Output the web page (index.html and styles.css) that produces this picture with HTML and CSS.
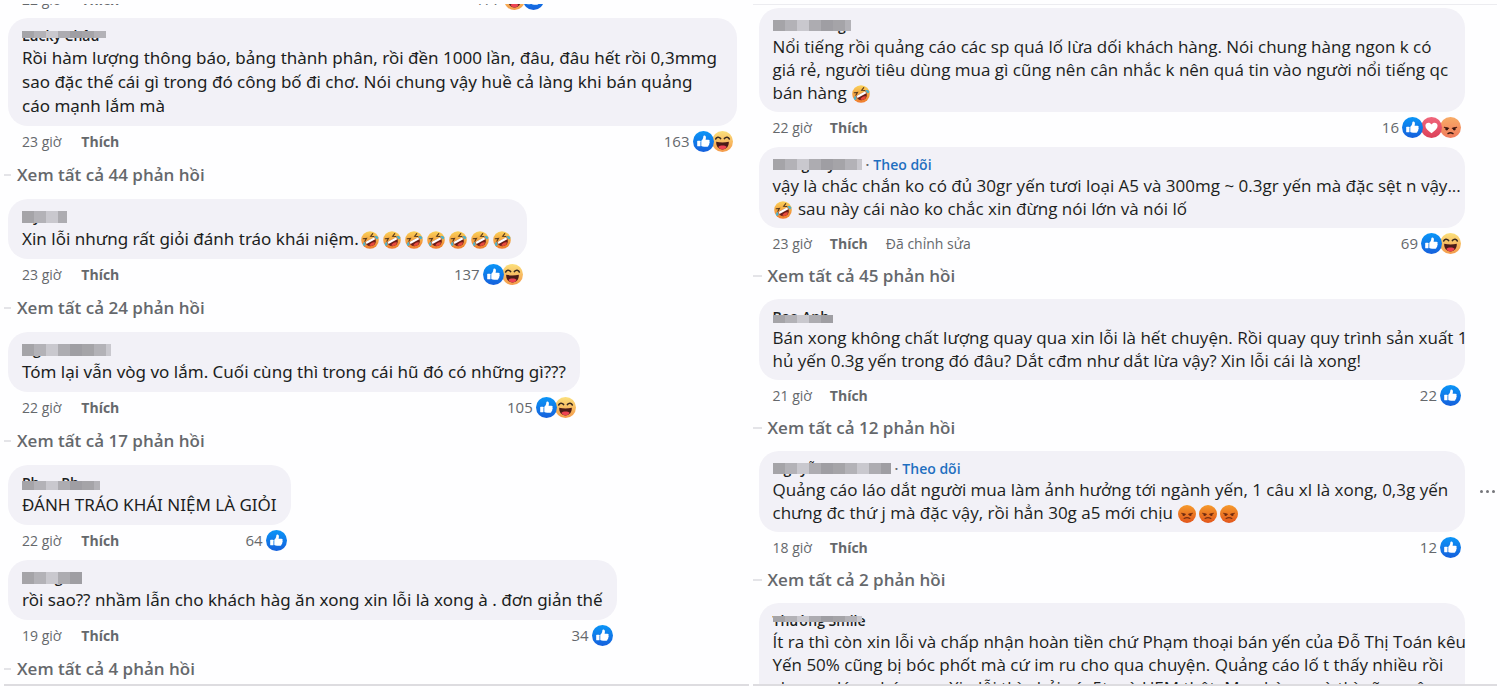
FILE: index.html
```html
<!DOCTYPE html>
<html lang="vi">
<head>
  <meta charset="UTF-8">
  <meta name="viewport" content="width=device-width, initial-scale=1.0">
  <title>Bình luận</title>
  <link rel="stylesheet" href="styles.css">
</head>
<body>
  <!-- Biểu tượng dùng chung -->
  <svg class="defs" aria-hidden="true">
    <defs>
      <linearGradient id="gBlue" x1="0" y1="0" x2="0" y2="1"><stop offset="0" stop-color="#0a95f7"/><stop offset="1" stop-color="#1560dc"/></linearGradient>
      <linearGradient id="gRed" x1="0" y1="0" x2="0" y2="1"><stop offset="0" stop-color="#f0667c"/><stop offset="1" stop-color="#dc4058"/></linearGradient>
      <linearGradient id="gYellow" x1="0" y1="0" x2="0" y2="1"><stop offset="0" stop-color="#fbe07c"/><stop offset="1" stop-color="#f49a4a"/></linearGradient>
      <linearGradient id="gOrange" x1="0" y1="0" x2="0" y2="1"><stop offset="0" stop-color="#f8ac66"/><stop offset="1" stop-color="#f07a5c"/></linearGradient>
      <linearGradient id="gMad" x1="0" y1="0" x2="0" y2="1"><stop offset="0" stop-color="#f59a2c"/><stop offset="1" stop-color="#e2561c"/></linearGradient>
      <linearGradient id="gRofl" x1="0" y1="0" x2="0" y2="1"><stop offset="0" stop-color="#fad25a"/><stop offset="1" stop-color="#ef7a2c"/></linearGradient>
    </defs>
    <symbol id="like" viewBox="0 0 20 20">
      <circle cx="10" cy="10" r="10" fill="url(#gBlue)"/>
      <path d="M4.600 9.200h1.900c.4 0 .6.2.6.6v4.200c0 .4-.2.6-.6.6H4.600c-.4 0-.6-.2-.6-.6V9.800c0-.4.2-.6.6-.6z" fill="#fff"/>
      <path d="M7.900 9.300c1.200-.8 1.800-2 1.900-3.500 0-.9.4-1.400 1.100-1.400 1 0 1.500.9 1.400 2.100 0 .7-.2 1.300-.3 1.800h2.600c1.300 0 1.700 1.200 1 1.900.5.6.4 1.400-.2 1.800.3.700 0 1.300-.6 1.600.1.900-.5 1.400-1.500 1.400h-2.700c-1.100 0-1.900-.3-2.700-.8z" fill="#fff"/>
    </symbol>
    <symbol id="haha" viewBox="0 0 20 20">
      <circle cx="10" cy="10" r="10" fill="url(#gYellow)"/>
      <path d="M3.500 7.600c.7-2 3.200-2.400 4.700-.4M11.800 7.200c1.500-2 4-1.600 4.700.4" fill="none" stroke="#3a2a20" stroke-width="1.500" stroke-linecap="round"/>
      <path d="M4 10.300c3.600.8 8.400.8 12 0 .3 4.200-2.200 7.200-6 7.200s-6.300-3-6-7.200z" fill="#4a1b18"/>
      <path d="M6 15.200c1.800-1.800 6.200-1.800 8 0-1 1.500-2.300 2.300-4 2.300s-3-.8-4-2.300z" fill="#ee4352"/>
    </symbol>
    <symbol id="love" viewBox="0 0 20 20">
      <circle cx="10" cy="10" r="10" fill="url(#gRed)"/>
      <path d="M10 15.400C6.500 13 4.200 11 4.200 8.400c0-3 3.900-3.900 5.800-1.300 1.900-2.600 5.800-1.700 5.800 1.300 0 2.600-2.300 4.600-5.800 7z" fill="#fff"/>
    </symbol>
    <symbol id="angry" viewBox="0 0 20 20">
      <circle cx="10" cy="10" r="10" fill="url(#gOrange)"/>
      <path d="M4.200 9.800l4 1M15.800 9.800l-4 1" stroke="#5a2418" stroke-width="1.200" stroke-linecap="round"/>
      <circle cx="6.400" cy="11.500" r="1.400" fill="#3a1812"/>
      <circle cx="13.600" cy="11.500" r="1.400" fill="#3a1812"/>
      <path d="M7.600 15.800c1.300-.8 3.500-.8 4.800 0" fill="none" stroke="#3a1812" stroke-width="1.400" stroke-linecap="round"/>
    </symbol>
    <symbol id="mad" viewBox="0 0 20 20">
      <circle cx="10" cy="10" r="10" fill="url(#gMad)"/>
      <path d="M4 9.200l4.200 1.200M16 9.200l-4.200 1.200" stroke="#8a3812" stroke-width="1.300" stroke-linecap="round"/>
      <circle cx="6.300" cy="10.800" r="1.400" fill="#6a2a12"/>
      <circle cx="13.700" cy="10.800" r="1.400" fill="#6a2a12"/>
      <path d="M6.800 15c1.700-1.100 4.700-1.100 6.400 0" fill="none" stroke="#7a3012" stroke-width="1.300" stroke-linecap="round"/>
    </symbol>
    <symbol id="rofl" viewBox="0 0 20 20">
      <circle cx="10" cy="10" r="9.800" fill="url(#gRofl)"/>
      <g transform="rotate(-28 10 10)">
        <path d="M4 5.200l3.300 1.500L4.300 8.600M16 5.200l-3.300 1.500 3 1.900" fill="none" stroke="#5a3a1c" stroke-width="1.300" stroke-linecap="round"/>
        <path d="M4 9.600h12c.3 4.500-2.200 7.400-6 7.400s-6.300-2.900-6-7.400z" fill="#6b1d18"/>
        <path d="M4.500 9.600h11v2.500h-11z" fill="#fff"/>
        <path d="M6.400 15c1.700-1.700 5.500-1.700 7.200 0-1 1.300-2.100 2-3.600 2s-2.600-.7-3.600-2z" fill="#e8493c"/>
        <path d="M3.600 8.800C1.500 9 .3 10.500.6 12c.3 1.200 2.200 1.400 2.700.2.400-.9.300-2.200.3-3.400zM16.400 8.800c2.100.2 3.300 1.700 3 3.200-.3 1.200-2.200 1.400-2.700.2-.4-.9-.3-2.200-.3-3.400z" fill="#4fb0c8"/>
      </g>
    </symbol>
  </svg>

  <main class="board">
    <!-- Cột trái -->
    <section class="pane pane-left">
      <article class="comment cut">
        <div class="actions">
          <span>22 giờ</span><button type="button" class="strong">Thích</button>
          <span class="reactions"><span class="count">177</span><svg><use href="#haha"/></svg><svg><use href="#like"/></svg></span>
        </div>
      </article>

      <article class="comment full">
        <div class="bubble">
          <div class="author"><span class="name low">Lucky Châu</span></div>
          <p>Rồi hàm lượng thông báo, bảng thành phân, rồi đền 1000 lần, đâu, đâu hết rồi 0,3mmg<br>sao đặc thế cái gì trong đó công bố đi chơ. Nói chung vậy huề cả làng khi bán quảng<br>cáo mạnh lắm mà</p>
        </div>
        <div class="actions">
          <span>23 giờ</span><button type="button" class="strong">Thích</button>
          <span class="reactions"><span class="count">163</span><svg><use href="#like"/></svg><svg><use href="#haha"/></svg></span>
        </div>
      </article>
      <button type="button" class="replies">Xem tất cả 44 phản hồi</button>

      <article class="comment">
        <div class="bubble">
          <div class="author"><span class="name short">&nbsp;&nbsp;&nbsp;y</span></div>
          <p>Xin lỗi nhưng rất giỏi đánh tráo khái niệm.<svg class="emoji"><use href="#rofl"/></svg><svg class="emoji"><use href="#rofl"/></svg><svg class="emoji"><use href="#rofl"/></svg><svg class="emoji"><use href="#rofl"/></svg><svg class="emoji"><use href="#rofl"/></svg><svg class="emoji"><use href="#rofl"/></svg><svg class="emoji"><use href="#rofl"/></svg></p>
        </div>
        <div class="actions">
          <span>23 giờ</span><button type="button" class="strong">Thích</button>
          <span class="reactions"><span class="count">137</span><svg><use href="#like"/></svg><svg><use href="#haha"/></svg></span>
        </div>
      </article>
      <button type="button" class="replies">Xem tất cả 24 phản hồi</button>

      <article class="comment">
        <div class="bubble">
          <div class="author"><span class="name long">&nbsp;&nbsp;&nbsp;g</span></div>
          <p>Tóm lại vẫn vòg vo lắm. Cuối cùng thì trong cái hũ đó có những gì???</p>
        </div>
        <div class="actions">
          <span>22 giờ</span><button type="button" class="strong">Thích</button>
          <span class="reactions"><span class="count">105</span><svg><use href="#like"/></svg><svg><use href="#haha"/></svg></span>
        </div>
      </article>
      <button type="button" class="replies">Xem tất cả 17 phản hồi</button>

      <article class="comment">
        <div class="bubble">
          <div class="author"><span class="name mid high">Ph&nbsp;&nbsp;&nbsp;&nbsp;&nbsp;&nbsp;Ph</span></div>
          <p>ĐÁNH TRÁO KHÁI NIỆM LÀ GIỎI</p>
        </div>
        <div class="actions">
          <span>22 giờ</span><button type="button" class="strong">Thích</button>
          <span class="reactions"><span class="count">64</span><svg><use href="#like"/></svg></span>
        </div>
      </article>

      <article class="comment">
        <div class="bubble">
          <div class="author"><span class="name small">&nbsp;&nbsp;&nbsp;&nbsp;&nbsp;&nbsp;&nbsp;&nbsp;&nbsp;g</span></div>
          <p>rồi sao?? nhầm lẫn cho khách hàg ăn xong xin lỗi là xong à . đơn giản thế</p>
        </div>
        <div class="actions">
          <span>19 giờ</span><button type="button" class="strong">Thích</button>
          <span class="reactions"><span class="count">34</span><svg><use href="#like"/></svg></span>
        </div>
      </article>
      <button type="button" class="replies">Xem tất cả 4 phản hồi</button>
    </section>

    <!-- Cột phải -->
    <section class="pane pane-right">
      <article class="comment full">
        <div class="bubble">
          <div class="author"><span class="name mid">&nbsp;&nbsp;&nbsp;&nbsp;&nbsp;&nbsp;&nbsp;&nbsp;&nbsp;&nbsp;&nbsp;&nbsp;&nbsp;&nbsp;&nbsp;&nbsp;&nbsp;&nbsp;g</span></div>
          <p>Nổi tiếng rồi quảng cáo các sp quá lố lừa dối khách hàng. Nói chung hàng ngon k có<br>giá rẻ, người tiêu dùng mua gì cũng nên cân nhắc k nên quá tin vào người nổi tiếng qc<br>bán hàng <svg class="emoji"><use href="#rofl"/></svg></p>
        </div>
        <div class="actions">
          <span>22 giờ</span><button type="button" class="strong">Thích</button>
          <span class="reactions"><span class="count">16</span><svg><use href="#like"/></svg><svg><use href="#love"/></svg><svg><use href="#angry"/></svg></span>
        </div>
      </article>

      <article class="comment full">
        <div class="bubble">
          <div class="author"><span class="name long">&nbsp;&nbsp;&nbsp;&nbsp;&nbsp;&nbsp;&nbsp;&nbsp;g&nbsp;&nbsp;&nbsp;&nbsp;&nbsp;y</span><span class="dot">·</span><a href="#">Theo dõi</a></div>
          <p>vậy là chắc chắn ko có đủ 30gr yến tươi loại A5 và 300mg ~ 0.3gr yến mà đặc sệt n vậy...<br><svg class="emoji"><use href="#rofl"/></svg> sau này cái nào ko chắc xin đừng nói lớn và nói lố</p>
        </div>
        <div class="actions">
          <span>23 giờ</span><button type="button" class="strong">Thích</button><span>Đã chỉnh sửa</span>
          <span class="reactions"><span class="count">69</span><svg><use href="#like"/></svg><svg><use href="#haha"/></svg></span>
        </div>
      </article>
      <button type="button" class="replies">Xem tất cả 45 phản hồi</button>

      <article class="comment full">
        <div class="bubble">
          <div class="author"><span class="name small high">Bao Anh</span></div>
          <p>Bán xong không chất lượng quay qua xin lỗi là hết chuyện. Rồi quay quy trình sản xuất 1<br>hủ yến 0.3g yến trong đó đâu? Dắt cđm như dắt lừa vậy? Xin lỗi cái là xong!</p>
        </div>
        <div class="actions">
          <span>21 giờ</span><button type="button" class="strong">Thích</button>
          <span class="reactions"><span class="count">22</span><svg><use href="#like"/></svg></span>
        </div>
      </article>
      <button type="button" class="replies">Xem tất cả 12 phản hồi</button>

      <article class="comment full">
        <div class="bubble">
          <div class="author"><span class="name wide">&nbsp;&nbsp;&nbsp;guyễ</span><span class="dot">·</span><a href="#">Theo dõi</a></div>
          <p>Quảng cáo láo dắt người mua làm ảnh hưởng tới ngành yến, 1 câu xl là xong, 0,3g yến<br>chưng đc thứ j mà đặc vậy, rồi hẳn 30g a5 mới chịu <svg class="emoji"><use href="#mad"/></svg><svg class="emoji"><use href="#mad"/></svg><svg class="emoji"><use href="#mad"/></svg></p>
        </div>
        <button type="button" class="more" aria-label="Tùy chọn"><i></i><i></i><i></i></button>
        <div class="actions">
          <span>18 giờ</span><button type="button" class="strong">Thích</button>
          <span class="reactions"><span class="count">12</span><svg><use href="#like"/></svg></span>
        </div>
      </article>
      <button type="button" class="replies">Xem tất cả 2 phản hồi</button>

      <article class="comment full">
        <div class="bubble">
          <div class="author"><span class="name long low">Thường Smile</span></div>
          <p>Ít ra thì còn xin lỗi và chấp nhận hoàn tiền chứ Phạm thoại bán yến của Đỗ Thị Toán kêu<br>Yến 50% cũng bị bóc phốt mà cứ im ru cho qua chuyện. Quảng cáo lố t thấy nhiều rồi<br>chưa ra láo, nháo ra... Xin lỗi thì phải có, 5tr và UEM thật, Mua hàng mà thì cũng nên</p>
        </div>
      </article>
    </section>
  </main>
</body>
</html>
```
FILE: styles.css
```css
* {
  box-sizing: border-box;
}
body {
  margin: 0;
  background: #fefeff;
  color: #1c1e21;
  font-family: "Open Sans", "Noto Sans", sans-serif;
  font-size: 17px;
}
button {
  padding: 0;
  border: 0;
  background: none;
  color: inherit;
  font: inherit;
  cursor: pointer;
}
.defs {
  position: absolute;
  width: 0;
  height: 0;
}

/* Hai cột bình luận */
.board {
  display: grid;
  grid-template-columns: 1fr 1fr;
  gap: 4px;
  padding: 4px 3px 0 4px;
}
.pane {
  height: calc(100vh - 18px);
  overflow: hidden;
  border-bottom: 2px solid #dddce0;
}
.pane-left {
  --line: 24px;
  --head: 20px;
  --replies: 38px;
  --edge: 4px;
  --side: 12px;
  --gap: 20px;
}
.pane-left p {
  font-family: "Noto Sans", "Open Sans", sans-serif;
}
.pane-right {
  --line: 23px;
  --head: 19px;
  --replies: 36px;
  --edge: 6px;
  --side: 32px;
  --gap: 18px;
  padding-top: 3px;
  border-top: 1px solid #ececf0;
}

/* Một bình luận */
.comment {
  display: grid;
  grid-template-columns: minmax(0, 1fr) var(--side);
  width: fit-content;
  margin: 0 0 5px var(--edge);
}
.comment.full {
  width: auto;
}
.comment.cut {
  width: 552px;
  margin-top: -20px;
  margin-bottom: 4px;
}
.bubble {
  padding: 8px 14px;
  border-radius: 20px;
  background: #f2f1f7;
}
.bubble p {
  margin: 0;
  line-height: var(--line);
  white-space: nowrap;
}
.author {
  display: flex;
  height: var(--head);
  font-size: 14px;
  font-weight: 600;
  line-height: var(--head);
}
.author a {
  color: #1f6fc0;
  text-decoration: none;
}
.dot {
  margin: 0 4px;
  color: #65686c;
}

/* Tên được che bằng các ô xám */
.name {
  position: relative;
  width: 84px;
  white-space: nowrap;
}
.name::after {
  content: "";
  position: absolute;
  inset: 4px 0;
  background: repeating-linear-gradient(90deg, #a5a4a8 0 12px, #b3b2b7 12px 24px, #c9c8ce 24px 36px, #adacb1 36px 48px, #9f9ea3 48px 60px);
}
.name.low::after {
  inset: 5px 0 8px;
}
.name.high::after {
  inset: 8px 0 3px;
}
.name.short { width: 45px; }
.name.small { width: 60px; }
.name.mid { width: 78px; }
.name.long { width: 89px; }
.name.wide { width: 118px; }

.emoji {
  width: 18px;
  height: 18px;
  margin: 0 2px;
  vertical-align: -4px;
}
.pane-right .emoji {
  margin: 0 2px 0 1px;
}

/* Hàng thời gian và cảm xúc */
.actions {
  grid-column: 1;
  display: flex;
  align-items: center;
  gap: var(--gap);
  height: 30px;
  padding: 0 4px 0 14px;
  color: #65686c;
  font-size: 14px;
  font-weight: 500;
}
.strong {
  font-weight: 700;
}
.reactions {
  display: flex;
  align-items: center;
  margin-left: auto;
}
.reactions svg {
  position: relative;
  width: 21px;
  height: 21px;
  margin-left: -2px;
}
.reactions svg:nth-of-type(1) {
  z-index: 2;
}
.reactions svg:nth-of-type(2) {
  z-index: 1;
}
.count {
  margin-right: 5px;
  font-size: 15px;
  font-weight: 400;
}

.replies {
  display: flex;
  align-items: center;
  gap: 6px;
  height: var(--replies);
  padding-bottom: 11px;
  color: #65686c;
  font-weight: 600;
}
.replies::before {
  content: "";
  width: calc(var(--edge) + 3px);
  height: 2px;
  background: #e4e4e8;
}

.more {
  display: flex;
  align-items: center;
  justify-content: center;
  gap: 3px;
  padding-left: 12px;
}
.more i {
  width: 3px;
  height: 3px;
  border-radius: 50%;
  background: #75767b;
}
```
